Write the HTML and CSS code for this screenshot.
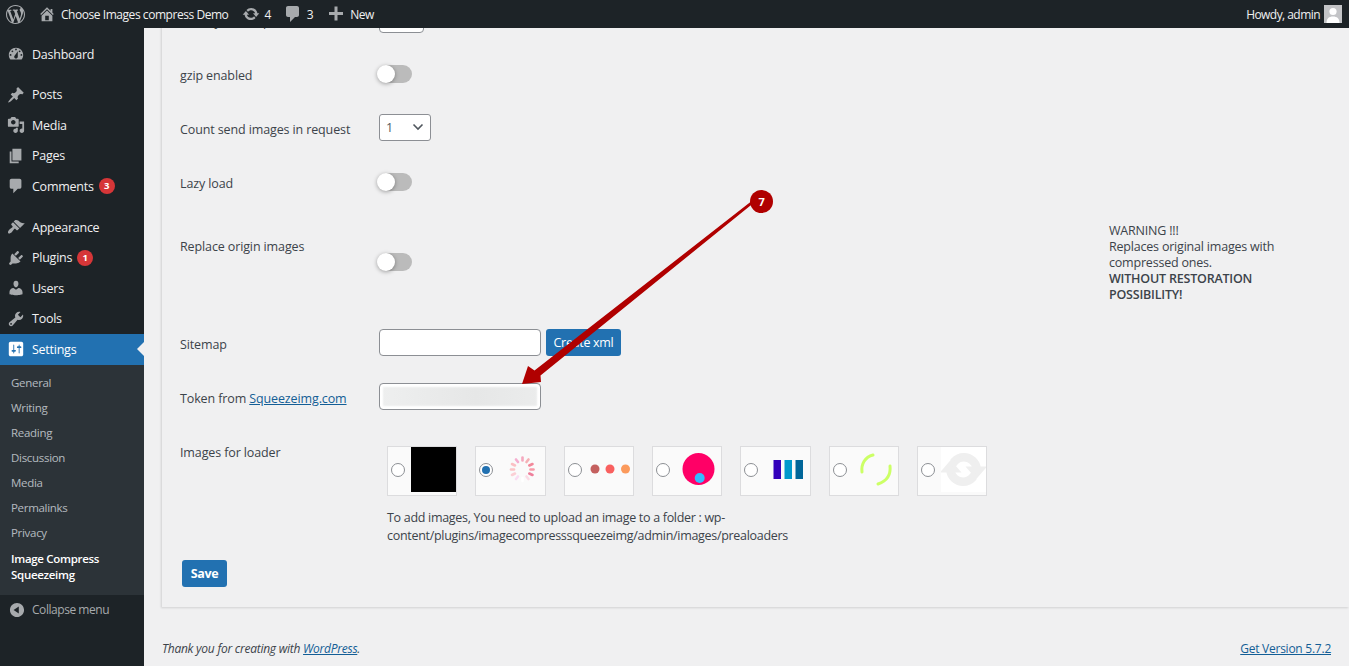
FILE: index.html
```html
<!doctype html>
<html>
  <head>
    <meta charset="utf-8" />
    <title>Image Compress Squeezeimg</title>
    <link rel="stylesheet" href="styles.css">
  </head>
  <body>
    <div class="adminbar">
      <a class="bar-item bar-logo">
        <svg class="bar-icon" viewBox="0 0 20 20"><path fill-rule="evenodd" d="M20 10c0-5.51-4.49-10-10-10C4.48 0 0 4.49 0 10c0 5.52 4.48 10 10 10 5.51 0 10-4.48 10-10zM7.78 15.37L4.37 6.22c.55-.02 1.17-.08 1.17-.08.5-.06.44-1.13-.06-1.11 0 0-1.45.11-2.37.11-.18 0-.37 0-.58-.01C4.12 2.69 6.87 1.11 10 1.11c2.33 0 4.45.87 6.05 2.34-.68-.11-1.65.39-1.65 1.58 0 .74.45 1.36.9 2.1.35.61.55 1.36.55 2.46 0 1.49-1.4 5-1.4 5l-3.03-8.37c.54-.02.82-.17.82-.17.5-.05.44-1.25-.06-1.22 0 0-1.44.12-2.38.12-.87 0-2.33-.12-2.33-.12-.5-.03-.56 1.2-.06 1.22l.92.08 1.26 3.41zM17.41 10c.24-.64.74-1.87.43-4.25.7 1.29 1.05 2.71 1.05 4.25 0 3.29-1.73 6.24-4.4 7.78.97-2.59 1.94-5.2 2.92-7.78zM6.1 18.09C3.12 16.65 1.11 13.53 1.11 10c0-1.3.23-2.48.72-3.59C3.25 10.3 4.67 14.2 6.1 18.09zm4.03-6.63l2.58 6.98c-.86.29-1.76.45-2.71.45-.79 0-1.57-.11-2.29-.33.81-2.38 1.62-4.74 2.42-7.1z"/></svg>
      </a>
      <a class="bar-item bar-home">
        <svg class="bar-icon" viewBox="0 0 20 20"><path fill-rule="evenodd" d="M16 8.5l1.53 1.53-1.06 1.06L10 4.62l-6.47 6.47-1.06-1.06L10 2.5l4 4v-2h2v4zm-6-2.46l6 5.99V18H4v-5.97zM12 17v-5H8v5h4z"/></svg>
        <span>Choose Images compress Demo</span>
      </a>
      <a class="bar-item bar-updates">
        <svg class="bar-icon" viewBox="0 0 20 20"><path d="M10.2 3.28c3.53 0 6.43 2.61 6.92 6h2.08l-3.5 4-3.5-4h2.32c-.45-1.97-2.21-3.45-4.32-3.45-1.45 0-2.73.71-3.54 1.78L4.95 5.66C6.23 4.2 8.11 3.28 10.2 3.28zm-.4 13.44c-3.52 0-6.43-2.61-6.92-6H.8l3.5-4c1.17 1.33 2.33 2.67 3.5 4H5.48c.45 1.97 2.21 3.45 4.32 3.45 1.45 0 2.73-.71 3.54-1.78l1.71 1.95c-1.28 1.46-3.15 2.38-5.25 2.38z"/></svg>
        <span>4</span>
      </a>
      <a class="bar-item bar-comments">
        <svg class="bar-icon" viewBox="0 0 20 20"><path d="M5 2h9c1.1 0 2 .9 2 2v7c0 1.1-.9 2-2 2h-2l-5 5v-5H5c-1.1 0-2-.9-2-2V4c0-1.1.9-2 2-2z"/></svg>
        <span>3</span>
      </a>
      <a class="bar-item bar-new">
        <svg class="bar-icon" viewBox="0 0 20 20"><path d="M17 8v3h-5.5v5.500h-3V11H3V8h5.500V2.500h3V8z"/></svg>
        <span>New</span>
      </a>
      <a class="bar-item bar-howdy">
        <span>Howdy, admin</span>
        <svg class="avatar" viewBox="0 0 18 18"><rect width="18" height="18" fill="#c3c4c7"/><circle cx="9" cy="6.500" r="3.600" fill="#fff"/><path d="M2.500 18c0-4.500 2.500-6.500 6.500-6.500s6.500 2 6.500 6.500z" fill="#fff"/></svg>
      </a>
    </div>

    <div class="layout">
      <div class="sidebar">
        <ul class="menu">
          <li class="menu-item menu-end">
            <svg viewBox="0 0 20 20"><path fill-rule="evenodd" d="M3.76 16h12.48c1.1-1.37 1.76-3.11 1.76-5 0-4.42-3.58-8-8-8s-8 3.58-8 8c0 1.890.660 3.630 1.760 5zM10 4c.55 0 1 .45 1 1s-.45 1-1 1-1-.45-1-1 .45-1 1-1zM6 6c.55 0 1 .45 1 1s-.45 1-1 1-1-.45-1-1 .45-1 1-1zm8 0c.55 0 1 .45 1 1s-.45 1-1 1-1-.45-1-1 .45-1 1-1zm-5.370 5.550L12 7v6c0 1.100-.9 2-2 2s-2-.9-2-2c0-.57.24-1.080.63-1.450zM4 10c.55 0 1 .45 1 1s-.45 1-1 1-1-.45-1-1 .45-1 1-1zm12 0c.55 0 1 .45 1 1s-.45 1-1 1-1-.45-1-1 .45-1 1-1z"/></svg>
            <span>Dashboard</span>
          </li>
          <li class="menu-item">
            <svg viewBox="0 0 20 20"><path d="M10.44 3.02l1.82-1.82 6.360 6.350-1.830 1.820c-1.050-.68-2.480-.57-3.410.36l-.75.75c-.92.93-1.040 2.350-.35 3.410l-1.830 1.820-2.410-2.410-2.800 2.790c-.42.42-3.380 2.710-3.800 2.290s1.860-3.390 2.280-3.810l2.790-2.790L4.100 9.360l1.830-1.820c1.050.69 2.480.57 3.400-.36l.75-.75c.93-.92 1.050-2.350.36-3.410z"/></svg>
            <span>Posts</span>
          </li>
          <li class="menu-item">
            <svg viewBox="0 0 20 20"><path fill-rule="evenodd" d="M13 11V4c0-.55-.45-1-1-1h-1.670L9 1H5L3.670 3H2c-.55 0-1 .45-1 1v7c0 .55.45 1 1 1h10c.55 0 1-.45 1-1zM7 4.500c1.380 0 2.500 1.120 2.500 2.500S8.380 9.500 7 9.500 4.500 8.380 4.500 7 5.620 4.500 7 4.500zM14 6h5v10.500c0 1.380-1.120 2.500-2.500 2.500S14 17.880 14 16.500s1.120-2.500 2.500-2.500c.17 0 .34.02.5.05V9h-3V6zm-4 8.050V13h2v3.500c0 1.380-1.120 2.500-2.500 2.500S7 17.880 7 16.500 8.120 14 9.500 14c.17 0 .34.02.5.05z"/></svg>
            <span>Media</span>
          </li>
          <li class="menu-item">
            <svg viewBox="0 0 20 20"><path d="M6 15V2h10v13H6zm-1 1h8v2H3V5h2v11z"/></svg>
            <span>Pages</span>
          </li>
          <li class="menu-item menu-end menu-end-wide">
            <svg viewBox="0 0 20 20"><path d="M5 2h9c1.100 0 2 .9 2 2v7c0 1.100-.9 2-2 2h-2l-5 5v-5H5c-1.100 0-2-.9-2-2V4c0-1.100.9-2 2-2z"/></svg>
            <span>Comments</span><b class="count">3</b>
          </li>
          <li class="menu-item">
            <svg viewBox="0 0 20 20"><path d="M14.480 11.060L7.410 3.990l1.500-1.500c.5-.56 2.300-.47 3.510.32 1.210.8 1.430 1.280 2.910 2.100 1.180.64 2.450 1.260 4.450.85zm-.71.71L6.700 4.700 4.930 6.470c-.39.39-.39 1.020 0 1.410l1.060 1.060c.39.39.39 1.030 0 1.420-.6.6-1.430 1.110-2.210 1.690-.35.26-.7.53-1.010.84-1.480 1.480-2.200 3.140-1.330 4.010s2.530.15 4.010-1.330c.31-.31.58-.66.84-1.010.58-.78 1.090-1.610 1.690-2.210.39-.39 1.030-.39 1.420 0l1.060 1.060c.39.39 1.020.39 1.410 0z"/></svg>
            <span>Appearance</span>
          </li>
          <li class="menu-item">
            <svg viewBox="0 0 20 20"><path d="M13.110 4.360L9.870 7.600 8 5.730l3.240-3.240c.35-.34 1.050-.2 1.560.32.52.51.66 1.210.31 1.550zm-8 1.770l.91-1.120 9.010 9.010-1.190.84c-.71.71-2.630 1.160-3.820 1.160H6.140L4.900 17.260c-.59.59-1.540.59-2.120 0-.59-.58-.59-1.530 0-2.120l1.240-1.240v-3.880c0-1.130.4-3.190 1.090-3.890zm7.260 3.970l3.240-3.240c.34-.35 1.040-.21 1.550.31.52.51.66 1.210.31 1.550l-3.240 3.250z"/></svg>
            <span>Plugins</span><b class="count">1</b>
          </li>
          <li class="menu-item">
            <svg viewBox="0 0 20 20"><path d="M10 9.250c-2.270 0-2.730-3.440-2.730-3.440C7 4.020 7.820 2 9.970 2c2.160 0 2.980 2.020 2.710 3.810 0 0-.41 3.440-2.680 3.440zm0 2.570L12.720 10c2.390 0 4.520 2.330 4.520 4.530v2.490s-3.650 1.130-7.240 1.130c-3.650 0-7.240-1.130-7.240-1.130v-2.490c0-2.250 1.940-4.480 4.470-4.480z"/></svg>
            <span>Users</span>
          </li>
          <li class="menu-item">
            <svg viewBox="0 0 20 20"><path fill-rule="evenodd" d="M16.680 9.770c-1.340 1.340-3.300 1.670-4.950.99l-5.410 6.520c-.99.99-2.590.99-3.580 0s-.99-2.590 0-3.570l6.520-5.420c-.68-1.650-.35-3.610.99-4.950 1.280-1.280 3.120-1.620 4.720-1.060l-2.890 2.890 2.820 2.820 2.860-2.870c.53 1.580.18 3.390-1.080 4.650zM3.810 16.210c.4.39 1.040.39 1.430 0 .4-.4.4-1.040 0-1.430-.39-.4-1.030-.4-1.430 0-.39.39-.39 1.030 0 1.430z"/></svg>
            <span>Tools</span>
          </li>
          <li class="menu-item menu-active">
            <svg viewBox="0 0 20 20"><path fill-rule="evenodd" d="M18 16V4c0-1.100-.9-2-2-2H4c-1.100 0-2 .9-2 2v12c0 1.100.9 2 2 2h12c1.100 0 2-.9 2-2zM8 11h1c.55 0 1 .45 1 1s-.45 1-1 1H8v1.500c0 .28-.22.5-.5.5s-.5-.22-.5-.5V13H6c-.55 0-1-.45-1-1s.45-1 1-1h1V5.500c0-.28.22-.5.5-.5s.5.22.5.5V11zm5-2h-1c-.55 0-1-.45-1-1s.45-1 1-1h1V5.500c0-.28.22-.5.5-.5s.5.22.5.5V7h1c.55 0 1 .45 1 1s-.45 1-1 1h-1v5.500c0 .28-.22.5-.5.5s-.5-.22-.5-.5V9z"/></svg>
            <span>Settings</span>
          </li>
        </ul>
        <ul class="submenu">
          <li>General</li>
          <li>Writing</li>
          <li>Reading</li>
          <li>Discussion</li>
          <li>Media</li>
          <li>Permalinks</li>
          <li>Privacy</li>
          <li class="sub-current">Image Compress Squeezeimg</li>
        </ul>
        <div class="collapse">
          <svg viewBox="0 0 20 20"><path fill-rule="evenodd" d="M10 2.160c4.330 0 7.840 3.510 7.840 7.840s-3.510 7.840-7.840 7.840S2.160 14.330 2.160 10 5.710 2.160 10 2.160zm2 11.720V6.120L6.180 9.970z"/></svg>
          <span>Collapse menu</span>
        </div>
      </div>

      <div class="content">
        <div class="panel">
          <div class="row">
            <div class="row-label">Quality of compress</div>
            <div class="row-field"><input class="text-small" type="text"></div>
          </div>
          <div class="row">
            <div class="row-label">gzip enabled</div>
            <div class="row-field"><span class="toggle"><i class="knob"></i></span></div>
          </div>
          <div class="row">
            <div class="row-label">Count send images in request</div>
            <div class="row-field"><select class="count-select"><option>1</option></select></div>
          </div>
          <div class="row">
            <div class="row-label">Lazy load</div>
            <div class="row-field"><span class="toggle"><i class="knob"></i></span></div>
          </div>
          <div class="row row-tall">
            <div class="row-label">Replace origin images</div>
            <div><span class="toggle"><i class="knob"></i></span></div>
            <div class="warning">
              WARNING !!!<br>
              Replaces original images with compressed ones.<br>
              <b>WITHOUT RESTORATION POSSIBILITY!</b>
            </div>
          </div>
          <div class="row">
            <div class="row-label">Sitemap</div>
            <div class="row-field field-line">
              <input class="text-input" type="text">
              <button class="btn">Create xml</button>
            </div>
          </div>
          <div class="row">
            <div class="row-label">Token from <a href="#">Squeezeimg.com</a></div>
            <div class="row-field"><input class="text-input token" type="text"></div>
          </div>
          <div class="row row-images">
            <div class="row-label">Images for loader</div>
            <div class="loaders-wrap">
              <div class="loaders">
                <label class="loader">
                  <input type="radio" name="loader">
                  <svg viewBox="0 0 45 45"><rect width="45" height="45" fill="#000"/></svg>
                </label>
                <label class="loader">
                  <input type="radio" name="loader" checked>
                  <svg viewBox="0 0 45 45">
                    <g stroke-width="2.600" stroke-linecap="round" transform="translate(-.5 -.5)">
                      <path d="M23 14V11" stroke="#f5a9bf"/>
                      <path d="M27 15.500L29 13" stroke="#f5b0b5"/>
                      <path d="M29.800 19L33 17.500" stroke="#f2889a"/>
                      <path d="M31 23H34" stroke="#f79aa8"/>
                      <path d="M29.800 27L33 28.500" stroke="#ee7f9b"/>
                      <path d="M27 30L29 32.500" stroke="#fbdbe5"/>
                      <path d="M23 31.500V34.500" stroke="#fff"/>
                      <path d="M18.500 30L16.500 32.500" stroke="#fadcf2"/>
                      <path d="M15.500 27L12.500 28.500" stroke="#fbcfd5"/>
                      <path d="M14.500 23H11.500" stroke="#fbc4c6"/>
                      <path d="M15.500 19L12.500 17.500" stroke="#fbc0c4"/>
                      <path d="M18.500 15.500L16.500 13" stroke="#f5aed0"/>
                    </g>
                  </svg>
                </label>
                <label class="loader">
                  <input type="radio" name="loader">
                  <svg viewBox="0 0 45 45">
                    <circle cx="7" cy="22" r="4.500" fill="#c4605f"/>
                    <circle cx="22" cy="22" r="4.500" fill="#f9605f"/>
                    <circle cx="37.500" cy="22" r="4.500" fill="#fb9a5c"/>
                  </svg>
                </label>
                <label class="loader">
                  <input type="radio" name="loader">
                  <svg viewBox="0 0 45 45">
                    <circle cx="22.500" cy="22" r="16" fill="#ff0066"/>
                    <circle cx="23.700" cy="31" r="5" fill="#33bbff"/>
                  </svg>
                </label>
                <label class="loader">
                  <input type="radio" name="loader">
                  <svg viewBox="0 0 45 45">
                    <rect x="8.500" y="13" width="7.500" height="19" fill="#3300bb"/>
                    <rect x="19.500" y="13" width="7.500" height="19" fill="#0099cc"/>
                    <rect x="30.500" y="13" width="7.500" height="19" fill="#006699"/>
                  </svg>
                </label>
                <label class="loader">
                  <input type="radio" name="loader">
                  <svg viewBox="0 0 45 45" fill="none" stroke="#ccff66" stroke-width="3" stroke-linecap="round">
                    <path d="M9 25C8 17 12 10 20 8"/>
                    <path d="M37 19C38 28 34 34 25 37"/>
                  </svg>
                </label>
                <label class="loader">
                  <input type="radio" name="loader">
                  <svg class="loader-white" viewBox="0 0 20 20"><path fill="#efefef" stroke="#efefef" stroke-width="1.200" d="M10.200 3.280c3.530 0 6.430 2.610 6.920 6h2.080l-3.500 4-3.500-4h2.320c-.45-1.970-2.210-3.450-4.320-3.450-1.450 0-2.730.71-3.540 1.780L4.950 5.660C6.230 4.200 8.110 3.280 10.200 3.280zm-.4 13.440c-3.520 0-6.430-2.610-6.920-6H.8l3.500-4c1.170 1.330 2.330 2.670 3.500 4H5.480c.45 1.970 2.210 3.450 4.320 3.450 1.450 0 2.730-.71 3.540-1.780l1.710 1.950c-1.280 1.460-3.150 2.380-5.250 2.380z"/></svg>
                </label>
              </div>
              <p class="loaders-note">To add images, You need to upload an image to a folder : wp-content/plugins/imagecompresssqueezeimg/admin/images/prealoaders</p>
            </div>
          </div>
          <button class="btn btn-save">Save</button>
        </div>
        <div class="footer">
          <i>Thank you for creating with <a href="#">WordPress</a>.</i>
          <a href="#">Get Version 5.7.2</a>
        </div>
      </div>
    </div>

    <svg class="note-arrow" viewBox="0 0 1349 666">
      <path d="M761 197L540.500 375.500L541 382L522 384L528 366L534.500 370.500L753 200z" fill="#b00000"/>
    </svg>
    <div class="note-badge">7</div>
  </body>
</html>
```

FILE: styles.css
```css
* {
  box-sizing: border-box;
}

html,
body {
  height: 100%;
}

body {
  margin: 0;
  overflow: hidden;
  background: #f0f0f1;
  color: #3c434a;
  font-family: "Open Sans", sans-serif;
  font-size: 12.5px;
  letter-spacing: -0.25px;
}

a {
  color: #135e96;
}

ul {
  list-style: none;
  margin: 0;
  padding: 0;
}

/* top bar */
.adminbar {
  display: flex;
  align-items: center;
  height: 28px;
  background: #1d2327;
  color: #f0f0f1;
  font-size: 12px;
  letter-spacing: -0.45px;
}

.bar-item {
  display: flex;
  align-items: center;
  gap: 4px;
  color: #f0f0f1;
}

.bar-icon {
  width: 20px;
  height: 20px;
  fill: #a7aaad;
}

.bar-logo {
  margin-left: 6px;
}

.bar-logo .bar-icon {
  width: 19px;
  height: 19px;
}

.bar-home {
  margin-left: 13px;
  gap: 5px;
}

.bar-home .bar-icon,
.bar-updates .bar-icon {
  width: 18px;
  height: 18px;
}

.bar-updates {
  margin-left: 14px;
}

.bar-comments {
  margin-left: 12px;
}

.bar-new {
  margin-left: 13px;
}

.bar-howdy {
  margin-left: auto;
  margin-right: 7px;
  gap: 4px;
  letter-spacing: -0.55px;
}

.avatar {
  width: 18px;
  height: 18px;
}

.layout {
  display: flex;
  height: 638px;
}

/* left menu */
.sidebar {
  flex: 0 0 144px;
  background: #1d2327;
  color: #f0f0f1;
  padding-top: 11px;
}

.menu-item {
  position: relative;
  display: flex;
  align-items: center;
  height: 30.5px;
  padding-left: 7px;
}

.menu-end {
  margin-bottom: 10px;
}

.menu-end-wide {
  margin-bottom: 10.5px;
}

.menu-item svg {
  width: 18px;
  height: 18px;
  margin-right: 7px;
  fill: #a7aaad;
}

.count {
  width: 16px;
  height: 16px;
  margin-left: 5px;
  border-radius: 50%;
  background: #d63638;
  color: #fff;
  font-size: 9.5px;
  line-height: 16px;
  text-align: center;
}

.menu-active {
  background: #2271b1;
  color: #fff;
}

.menu-active svg {
  fill: #fff;
}

.menu-active::after {
  content: "";
  position: absolute;
  right: 0;
  top: 50%;
  margin-top: -7px;
  border: 7px solid transparent;
  border-right-color: #f0f0f1;
  border-left-width: 0;
}

.submenu {
  background: #2c3338;
  padding: 5px 0 12px 11px;
  color: rgba(240, 246, 252, 0.7);
  font-size: 11.5px;
  letter-spacing: -0.3px;
}

.submenu li {
  height: 25px;
  line-height: 25px;
}

.submenu .sub-current {
  height: auto;
  margin-top: 6px;
  padding-right: 20px;
  color: #fff;
  font-weight: 600;
  line-height: 16px;
}

.collapse {
  display: flex;
  align-items: center;
  height: 30px;
  padding-left: 8px;
  color: #a7aaad;
  font-size: 12px;
  letter-spacing: -0.45px;
}

.collapse svg {
  width: 18px;
  height: 18px;
  margin-right: 6px;
  fill: #a7aaad;
}

/* main area */
.content {
  flex: 1;
  display: flex;
  flex-direction: column;
  min-width: 0;
  overflow: hidden;
}

.panel {
  margin: -34px 0 0 18px;
  padding: 0 0 20px 18px;
  box-shadow: -1px 1px 2px rgba(0, 0, 0, 0.13);
  letter-spacing: -0.12px;
}

.row {
  display: grid;
  grid-template-columns: 199px 730px 180px;
  align-items: center;
  height: 54px;
}

.row-field {
  padding-bottom: 4px;
}

.row-field .toggle {
  margin-top: 2px;
}

.row-tall {
  height: 104px;
  margin-bottom: 3px;
}

.row-tall .row-label {
  align-self: start;
  padding-top: 28px;
}

.warning {
  padding-top: 2px;
  line-height: 16px;
  letter-spacing: -0.2px;
}

.warning b {
  display: block;
  font-weight: 600;
}

.row-images {
  height: auto;
  align-items: start;
}

.row-images .row-label {
  line-height: 56px;
}

.loaders-wrap {
  grid-column: 2 / 4;
  padding: 21px 0 0 8px;
}

.loaders {
  display: flex;
  gap: 18px;
}

.loader {
  display: flex;
  justify-content: space-between;
  width: 70.33px;
  height: 50px;
  padding-left: 3px;
  border: 1px solid #dcdcde;
  background: #fafafa;
}

.loader svg {
  width: 45px;
  height: 45px;
}

.loader .loader-white {
  background: #fff;
}

.loader input {
  appearance: none;
  display: flex;
  align-items: center;
  justify-content: center;
  width: 14px;
  height: 14px;
  margin: 16px 0 0;
  border: 1px solid #8c8f94;
  border-radius: 50%;
  background: #fff;
}

.loader input:checked::before {
  content: "";
  width: 8px;
  height: 8px;
  border-radius: 50%;
  background: #2271b1;
}

.loaders-note {
  width: 430px;
  margin: 13px 0 0;
  line-height: 18px;
  letter-spacing: -0.3px;
}

.toggle {
  display: flex;
  width: 33px;
  height: 18px;
  border-radius: 9px;
  background: #bbb;
}

.knob {
  width: 18px;
  height: 18px;
  margin-left: -2px;
  border-radius: 50%;
  background: #fff;
  box-shadow: 0 1px 4px rgba(0, 0, 0, 0.35);
}

.text-small {
  display: block;
  width: 45px;
  height: 27px;
  border: 1px solid #8c8f94;
  border-radius: 4px;
  background: #fff;
}

.text-input {
  display: block;
  width: 162px;
  height: 27px;
  border: 1px solid #8c8f94;
  border-radius: 4px;
  background: #fff;
}

.token {
  background: linear-gradient(90deg, #eeefef, #e6e7e7 60%, #ebecec);
  box-shadow: inset 0 0 2px 3px #fff;
}

.count-select {
  appearance: none;
  display: block;
  width: 52px;
  height: 27px;
  padding-left: 6px;
  border: 1px solid #8c8f94;
  border-radius: 3px;
  color: #50575e;
  font: inherit;
  background: #fff url("data:image/svg+xml,%3Csvg xmlns='http://www.w3.org/2000/svg' width='12' height='8'%3E%3Cpath d='M1.500 1.500L6 6l4.500-4.500' fill='none' stroke='%2350575e' stroke-width='1.600'/%3E%3C/svg%3E") no-repeat right 6px center;
}

.field-line {
  display: flex;
  gap: 5px;
}

.btn {
  height: 27px;
  padding: 0 7.5px;
  border: 0;
  border-radius: 3px;
  background: #2271b1;
  color: #fff;
  font: inherit;
  letter-spacing: -0.3px;
}

.btn-save {
  display: block;
  width: 45px;
  margin: 15px 0 0 2px;
  padding: 0;
  font-weight: 700;
}

.footer {
  display: flex;
  justify-content: space-between;
  margin-top: 33px;
  padding: 0 18px;
  line-height: 18px;
  font-size: 12px;
  letter-spacing: -0.25px;
}

/* screenshot annotation */
.note-arrow {
  position: absolute;
  left: 0;
  top: 0;
  width: 1349px;
  height: 666px;
  pointer-events: none;
}

.note-badge {
  position: absolute;
  left: 750px;
  top: 190px;
  width: 23px;
  height: 23px;
  border-radius: 50%;
  background: #b00000;
  color: #fff;
  font-size: 11px;
  font-weight: 700;
  line-height: 23px;
  text-align: center;
}
```
